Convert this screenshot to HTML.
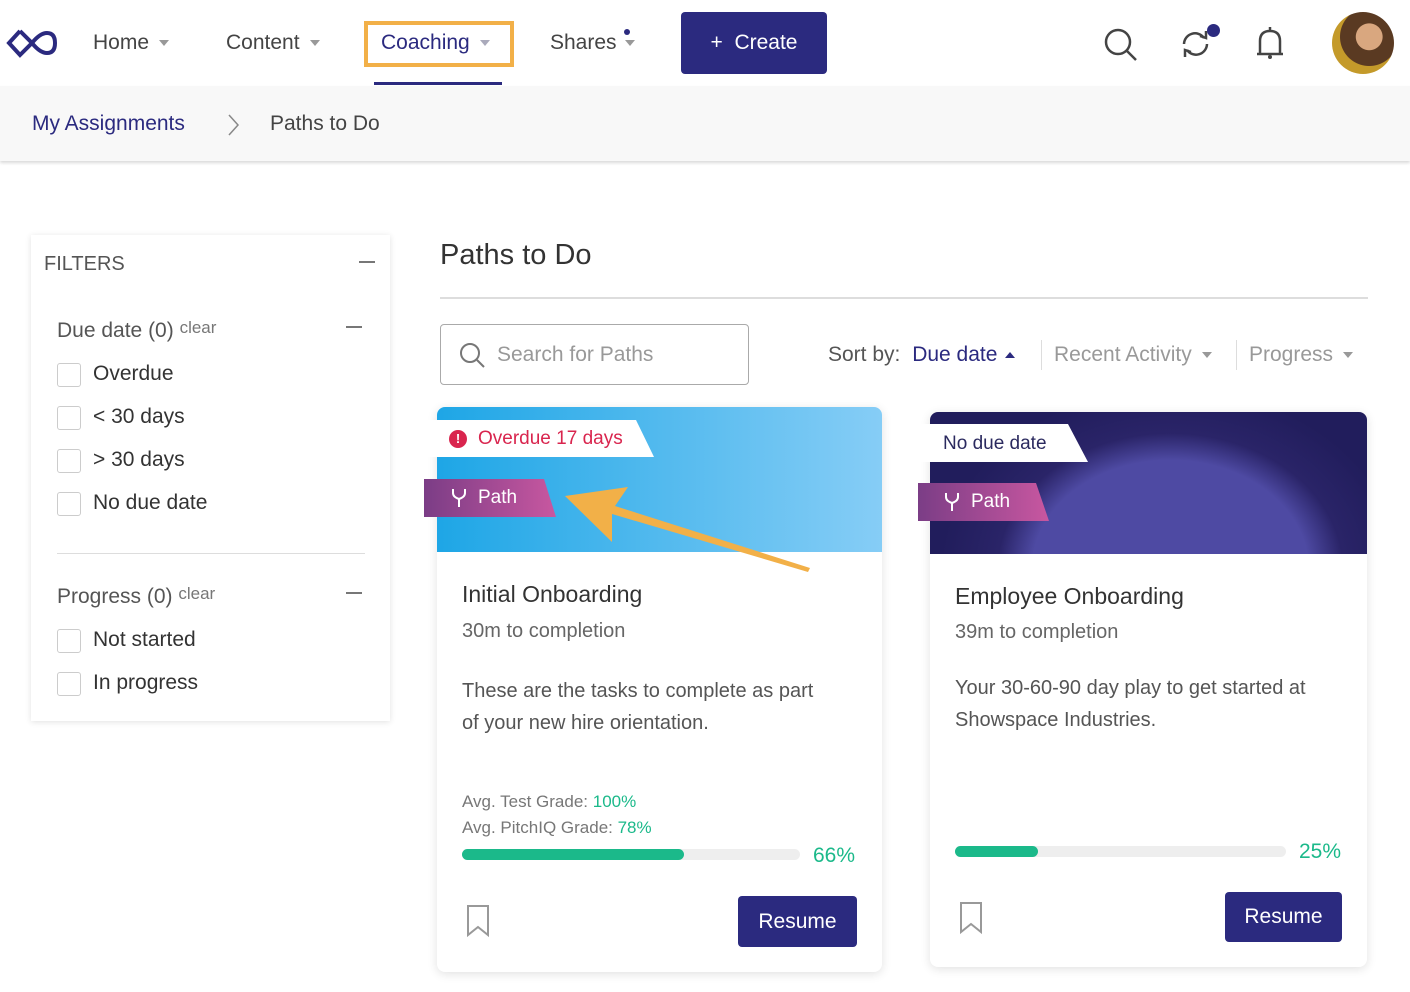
<!DOCTYPE html>
<html><head><meta charset="utf-8"><style>
*{box-sizing:border-box;margin:0;padding:0}
body{width:1410px;height:992px;overflow:hidden;background:#fff;font-family:"Liberation Sans",sans-serif;color:#333;position:relative}
.a{position:absolute}
.nav{font-size:21px;color:#444}
.caret{display:inline-block;width:0;height:0;border-left:5px solid transparent;border-right:5px solid transparent;border-top:6px solid #999;vertical-align:middle;margin-left:10px}
.cb{position:absolute;width:24px;height:24px;border:1px solid #ccc;border-radius:3px;background:#fff}
.fl{position:absolute;font-size:21px;color:#333}
.card{position:absolute;background:#fff;box-shadow:0 2px 10px rgba(0,0,0,.12);border-radius:8px;overflow:hidden}
.btn{position:absolute;background:#2b2a7f;color:#fff;font-size:21px;border-radius:4px;text-align:center}
</style></head><body>
<svg class="a" style="left:6px;top:28px" width="52" height="30" viewBox="0 0 52 30"><path d="M14 3 L3 15 L14 27 L26 15 Q34 5 41 5 Q49 5 49 15 Q49 25 41 25 Q34 25 26 15 L14 3" fill="none" stroke="#2b2a7f" stroke-width="4"/></svg>
<div class="a nav" style="left:93px;top:31px">Home<span class="caret"></span></div>
<div class="a nav" style="left:226px;top:31px">Content<span class="caret"></span></div>
<div class="a" style="left:364px;top:21px;width:150px;height:46px;border:4px solid #f2b048"></div>
<div class="a nav" style="left:381px;top:31px;color:#2b2a7f">Coaching<span class="caret" style="border-top-color:#aab"></span></div>
<div class="a" style="left:374px;top:82px;width:128px;height:3px;background:#2b2a7f"></div>
<div class="a nav" style="left:550px;top:31px">Shares<span class="caret" style="margin-left:8px"></span></div>
<div class="a" style="left:624px;top:29px;width:6px;height:6px;border-radius:50%;background:#2b2a7f"></div>
<div class="btn" style="left:681px;top:12px;width:146px;height:62px;line-height:62px">+&nbsp;&nbsp;Create</div>
<svg class="a" style="left:1100px;top:24px" width="40" height="40"><circle cx="18" cy="18" r="12" fill="none" stroke="#444" stroke-width="2.5"/><path d="M27 27 L36 36" stroke="#444" stroke-width="2.5"/></svg>
<svg class="a" style="left:1176px;top:26px" width="40" height="34"><path d="M8 18 A11 11 0 0 1 28 12 M31 18 A11 11 0 0 1 11 24" fill="none" stroke="#444" stroke-width="2.5"/><path d="M24 10 L30 12 L30 5 M15 26 L9 24 L9 31" fill="none" stroke="#444" stroke-width="2.5"/></svg>
<div class="a" style="left:1207px;top:24px;width:13px;height:13px;border-radius:50%;background:#2b2a7f"></div>
<svg class="a" style="left:1253px;top:24px" width="34" height="38"><path d="M7 30 L7 17 Q7 7 17 7 Q27 7 27 17 L27 30 Z M4 30 H30 M17 3 V7" fill="none" stroke="#444" stroke-width="2.5"/><circle cx="17" cy="33" r="2" fill="#444"/></svg>
<div class="a" style="left:1332px;top:12px;width:62px;height:62px;border-radius:50%;background:radial-gradient(circle at 60% 40%,#d9a77f 0 25%,#5a3a22 26% 55%,#c49a2a 56%)"></div>
<div class="a" style="left:0;top:86px;width:1410px;height:75px;background:#f8f8f8;box-shadow:0 2px 3px rgba(0,0,0,.15)"></div>
<div class="a" style="left:32px;top:112px;font-size:21px;color:#2b2a7f">My Assignments</div>
<svg class="a" style="left:226px;top:113px" width="14" height="24"><path d="M3 2 L12 12 L3 22" fill="none" stroke="#888" stroke-width="1.5"/></svg>
<div class="a" style="left:270px;top:112px;font-size:21px;color:#444">Paths to Do</div>
<div class="a" style="left:31px;top:235px;width:359px;height:486px;background:#fff;box-shadow:0 1px 6px rgba(0,0,0,.12)"></div>
<div class="a" style="left:44px;top:253px;font-size:20px;color:#555">FILTERS</div>
<div class="a" style="left:359px;top:261px;width:16px;height:2px;background:#777"></div>
<div class="fl" style="left:57px;top:318px;color:#555">Due date (0) <span style="font-size:17px;color:#777;vertical-align:4px">clear</span></div>
<div class="a" style="left:346px;top:326px;width:16px;height:2px;background:#777"></div>
<div class="cb" style="left:57px;top:363px"></div><div class="fl" style="left:93px;top:362px">Overdue</div>
<div class="cb" style="left:57px;top:406px"></div><div class="fl" style="left:93px;top:405px">&lt; 30 days</div>
<div class="cb" style="left:57px;top:449px"></div><div class="fl" style="left:93px;top:448px">&gt; 30 days</div>
<div class="cb" style="left:57px;top:492px"></div><div class="fl" style="left:93px;top:491px">No due date</div>
<div class="a" style="left:57px;top:553px;width:308px;height:1px;background:#ddd"></div>
<div class="fl" style="left:57px;top:584px;color:#555">Progress (0) <span style="font-size:17px;color:#777;vertical-align:4px">clear</span></div>
<div class="a" style="left:346px;top:592px;width:16px;height:2px;background:#777"></div>
<div class="cb" style="left:57px;top:629px"></div><div class="fl" style="left:93px;top:628px">Not started</div>
<div class="cb" style="left:57px;top:672px"></div><div class="fl" style="left:93px;top:671px">In progress</div>
<div class="a" style="left:440px;top:239px;font-size:29px;color:#333">Paths to Do</div>
<div class="a" style="left:440px;top:297px;width:928px;height:2px;background:#ddd"></div>
<div class="a" style="left:440px;top:324px;width:309px;height:61px;border:1px solid #aaa;border-radius:4px"></div>
<svg class="a" style="left:458px;top:341px" width="28" height="28"><circle cx="12" cy="12" r="9" fill="none" stroke="#777" stroke-width="2"/><path d="M19 19 L26 26" stroke="#777" stroke-width="2"/></svg>
<div class="a" style="left:497px;top:343px;font-size:21px;color:#999">Search for Paths</div>
<div class="a" style="left:828px;top:343px;font-size:21px;color:#555">Sort by: <span style="color:#2b2a7f;margin-left:6px">Due date</span><span style="display:inline-block;border-left:5px solid transparent;border-right:5px solid transparent;border-bottom:6px solid #2b2a7f;vertical-align:middle;margin-left:8px"></span></div>
<div class="a" style="left:1041px;top:340px;width:1px;height:30px;background:#ddd"></div>
<div class="a" style="left:1054px;top:343px;font-size:21px;color:#999">Recent Activity<span class="caret"></span></div>
<div class="a" style="left:1236px;top:340px;width:1px;height:30px;background:#ddd"></div>
<div class="a" style="left:1249px;top:343px;font-size:21px;color:#999">Progress<span class="caret"></span></div>
<div class="card" style="left:437px;top:407px;width:445px;height:565px">
<div class="a" style="left:0;top:0;width:445px;height:145px;background:linear-gradient(90deg,#1ea6e6,#86cdf6)"></div>
<div class="a" style="left:25px;top:174px;font-size:23px;color:#333">Initial Onboarding</div>
<div class="a" style="left:25px;top:213px;font-size:20px;color:#666">30m to completion</div>
<div class="a" style="left:25px;top:268px;font-size:20px;color:#555;line-height:32px;width:365px">These are the tasks to complete as part of your new hire orientation.</div>
<div class="a" style="left:25px;top:382px;font-size:17px;color:#777;line-height:26px">Avg. Test Grade: <span style="color:#1bb98a">100%</span><br>Avg. PitchIQ Grade: <span style="color:#1bb98a">78%</span></div>
<div class="a" style="left:25px;top:442px;width:338px;height:11px;border-radius:6px;background:#eee"><div style="width:222px;height:11px;border-radius:6px;background:#1bb98a"></div></div>
<div class="a" style="left:376px;top:437px;font-size:21px;color:#1bb98a">66%</div>
<svg class="a" style="left:29px;top:497px" width="26" height="34"><path d="M2 2 H22 V31 L12 23 L2 31 Z" fill="none" stroke="#999" stroke-width="2"/></svg>
<div class="btn" style="left:301px;top:489px;width:119px;height:51px;line-height:51px">Resume</div>
</div>
<div class="a" style="left:424px;top:420px;width:230px;height:37px;background:#fff;clip-path:polygon(0 0,212px 0,100% 100%,0 100%)"></div>
<div class="a" style="left:449px;top:430px;width:18px;height:18px;border-radius:50%;background:#d9254e;color:#fff;font-size:13px;font-weight:bold;text-align:center;line-height:18px">!</div>
<div class="a" style="left:478px;top:428px;font-size:19px;color:#d9254e">Overdue 17 days</div>
<div class="a" style="left:424px;top:479px;width:132px;height:38px;background:linear-gradient(90deg,#7b3d86,#c857a0);clip-path:polygon(0 0,120px 0,100% 100%,0 100%)"></div>
<div class="a" style="left:478px;top:487px;font-size:19px;color:#fff">Path</div>
<svg class="a" style="left:450px;top:487px" width="18" height="22"><path d="M3 2 V6 Q3 10 9 12 Q15 10 15 6 V2 M9 12 V20" fill="none" stroke="#fff" stroke-width="2"/></svg>
<svg class="a" style="left:560px;top:484px" width="256" height="90"><path d="M5 12 L68 3 L55 22 L250 84 L248 88 L52 30 L52 58 Z" fill="#f2b048"/></svg>
<div class="card" style="left:930px;top:412px;width:437px;height:555px">
<div class="a" style="left:0;top:0;width:437px;height:142px;background:radial-gradient(ellipse 230px 180px at 55% 110%,#4e4aa3 0 60%,#2a2468 75%,#211d5c)"></div>
<div class="a" style="left:25px;top:171px;font-size:23px;color:#333">Employee Onboarding</div>
<div class="a" style="left:25px;top:209px;font-size:20px;color:#666">39m to completion</div>
<div class="a" style="left:25px;top:260px;font-size:20px;color:#555;line-height:32px;width:375px">Your 30-60-90 day play to get started at Showspace Industries.</div>
<div class="a" style="left:25px;top:434px;width:331px;height:11px;border-radius:6px;background:#eee"><div style="width:83px;height:11px;border-radius:6px;background:#1bb98a"></div></div>
<div class="a" style="left:369px;top:428px;font-size:21px;color:#1bb98a">25%</div>
<svg class="a" style="left:29px;top:489px" width="26" height="34"><path d="M2 2 H22 V31 L12 23 L2 31 Z" fill="none" stroke="#999" stroke-width="2"/></svg>
<div class="btn" style="left:295px;top:480px;width:117px;height:50px;line-height:50px">Resume</div>
</div>
<div class="a" style="left:918px;top:424px;width:170px;height:38px;background:#fff;clip-path:polygon(0 0,150px 0,100% 100%,0 100%)"></div>
<div class="a" style="left:943px;top:433px;font-size:19px;color:#2b2a5f">No due date</div>
<div class="a" style="left:918px;top:483px;width:131px;height:38px;background:linear-gradient(90deg,#7b3d86,#c857a0);clip-path:polygon(0 0,118px 0,100% 100%,0 100%)"></div>
<div class="a" style="left:971px;top:491px;font-size:19px;color:#fff">Path</div>
<svg class="a" style="left:943px;top:491px" width="18" height="22"><path d="M3 2 V6 Q3 10 9 12 Q15 10 15 6 V2 M9 12 V20" fill="none" stroke="#fff" stroke-width="2"/></svg>
</body></html>
